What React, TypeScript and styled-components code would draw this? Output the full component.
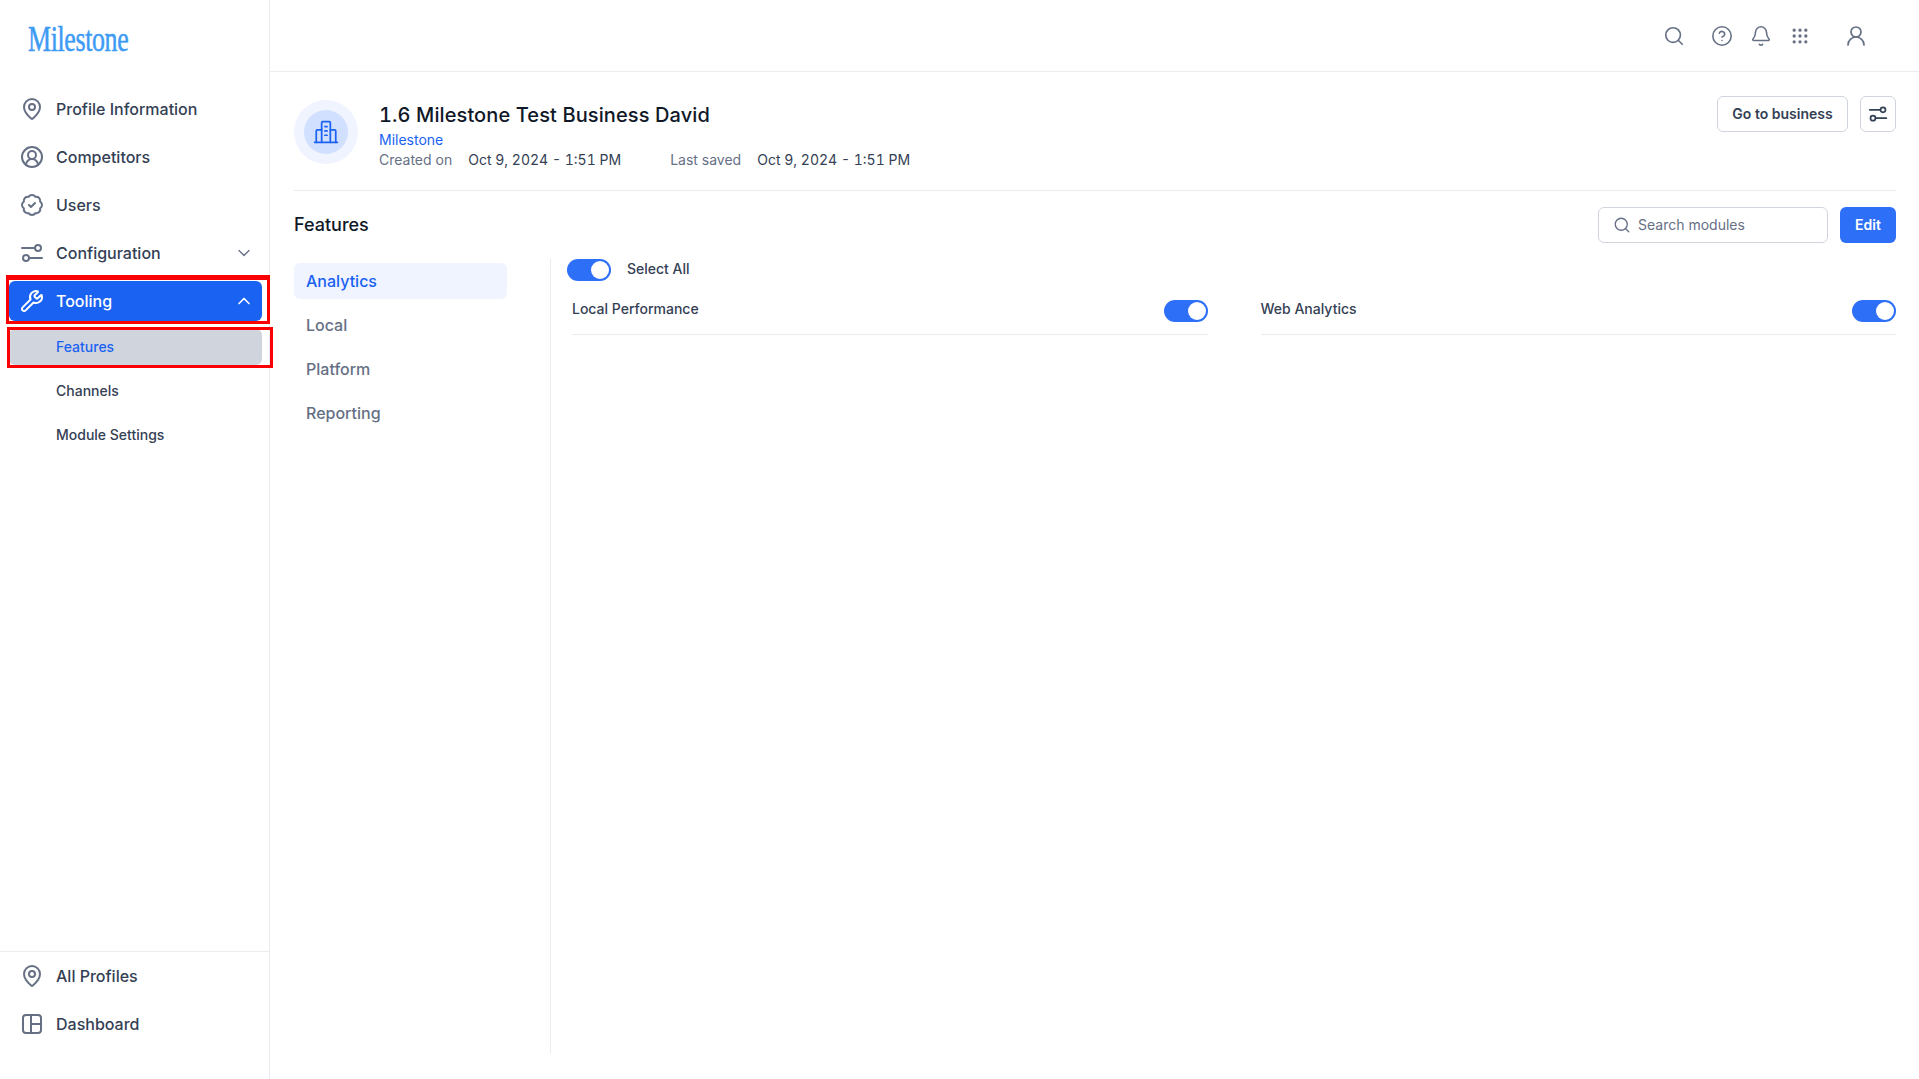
import styled, { createGlobalStyle } from "styled-components";
import {
  Bell,
  BadgeCheck,
  ChevronDown,
  ChevronUp,
  CircleHelp,
  CircleUserRound,
  Grip,
  MapPin,
  Search,
  UserRound,
  Wrench,
} from "lucide-react";

const GlobalStyle = createGlobalStyle`
  html, body {
    margin: 0;
    padding: 0;
    height: 100%;
    background: #fff;
    font-family: Inter, "Liberation Sans", sans-serif;
    overflow: hidden;
  }
  * {
    box-sizing: border-box;
  }
`;

function SlidersIcon({ size = 24 }: { size?: number }) {
  return (
    <svg width={size} height={size} viewBox="0 0 24 24" fill="none" stroke="currentColor" strokeWidth="2" strokeLinecap="round">
      <circle cx="18" cy="7" r="3" />
      <circle cx="6" cy="17" r="3" />
      <path d="M2 7h13M9 17h13" />
    </svg>
  );
}

function DashboardIcon() {
  return (
    <svg width="24" height="24" viewBox="0 0 24 24" fill="none" stroke="currentColor" strokeWidth="2" strokeLinejoin="round">
      <rect x="3" y="3" width="18" height="18" rx="3" />
      <path d="M11 3v18M11 12h10" />
    </svg>
  );
}

function BuildingIcon() {
  return (
    <svg width="26" height="26" viewBox="0 0 24 24" fill="none" stroke="currentColor" strokeWidth="1.6" strokeLinecap="round" strokeLinejoin="round">
      <path d="M1.5 21.5h21" />
      <path d="M8 21.5V3.5a1 1 0 0 1 1-1h6a1 1 0 0 1 1 1v18" />
      <path d="M8 10H4a1 1 0 0 0-1 1v10.5M16 10h4a1 1 0 0 1 1 1v10.5" />
      <path d="M11 7h2M11 11h2M11 15h2" />
    </svg>
  );
}

const Shell = styled.div`
  display: flex;
  height: 100vh;
  color: #344054;
`;

const Sidebar = styled.aside`
  width: 270px;
  flex-shrink: 0;
  display: flex;
  flex-direction: column;
  border-right: 1px solid #eaecf0;
`;

const LogoBar = styled.div`
  height: 89px;
  padding: 21px 0 0 28px;
`;

const Logo = styled.div`
  display: inline-block;
  font-family: "Liberation Serif", serif;
  font-size: 35px;
  line-height: 38px;
  letter-spacing: -0.5px;
  color: #3d9bf4;
  -webkit-text-stroke: 0.5px #3d9bf4;
  transform: scaleX(0.74);
  transform-origin: left center;
`;

const NavList = styled.nav`
  flex: 1;
  display: flex;
  flex-direction: column;
  gap: 8px;
  padding: 0 7px 0 9px;
`;

const NavItem = styled.div<{ $active?: boolean; $boxed?: boolean }>`
  position: relative;
  height: 40px;
  flex-shrink: 0;
  display: flex;
  align-items: center;
  gap: 12px;
  padding: 0 8px 0 11px;
  border-radius: 6px;
  font-size: 16px;
  font-weight: 500;
  color: ${(p) => (p.$active ? "#fff" : "#344054")};
  background: ${(p) => (p.$active ? "#1a62f2" : "transparent")};

  > svg:first-child {
    flex-shrink: 0;
    color: ${(p) => (p.$active ? "#fff" : "#667085")};
  }

  ${(p) =>
    p.$boxed &&
    `
    &::after {
      content: "";
      position: absolute;
      inset: -6px -8px -3px -3px;
      border: 3px solid #fa0000;
      border-top-width: 5px;
      pointer-events: none;
    }
  `}
`;

const NavLabel = styled.span`
  flex: 1;
`;

const Caret = styled.span<{ $active?: boolean }>`
  display: flex;
  color: ${(p) => (p.$active ? "#fff" : "#667085")};
`;

const SubList = styled.div`
  display: flex;
  flex-direction: column;
  margin-top: -4px;
`;

const SubItem = styled.div<{ $active?: boolean }>`
  position: relative;
  height: ${(p) => (p.$active ? "36px" : "44px")};
  margin: ${(p) => (p.$active ? "4px 0" : "0")};
  display: flex;
  align-items: center;
  padding: 0 0 1px 47px;
  border-radius: 6px;
  font-size: 14px;
  font-weight: 500;
  color: ${(p) => (p.$active ? "#1a62f2" : "#344054")};
  background: ${(p) => (p.$active ? "#d0d5dd" : "transparent")};

  ${(p) =>
    p.$active &&
    `
    &::after {
      content: "";
      position: absolute;
      inset: -2px -11px -3px -2px;
      border: 3px solid #fa0000;
      pointer-events: none;
    }
  `}
`;

const SidebarFooter = styled.div`
  display: flex;
  flex-direction: column;
  gap: 8px;
  padding: 4px 7px 35px 9px;
  border-top: 1px solid #eaecf0;
`;

const Main = styled.main`
  flex: 1;
  min-width: 0;
  display: flex;
  flex-direction: column;
`;

const TopBar = styled.header`
  height: 72px;
  flex-shrink: 0;
  display: flex;
  align-items: center;
  justify-content: flex-end;
  padding: 0 51px 0 0;
  border-bottom: 1px solid #eaecf0;
  color: #667085;
`;

const TopIcon = styled.span<{ $gap: number }>`
  display: flex;
  margin-left: ${(p) => p.$gap}px;
`;

const Content = styled.div`
  flex: 1;
  display: flex;
  flex-direction: column;
  padding: 24px 23px 25px 24px;
  min-height: 0;
`;

const BusinessHeader = styled.section`
  display: flex;
  justify-content: space-between;
  height: 95px;
  border-bottom: 1px solid #eaecf0;
`;

const BusinessInfo = styled.div`
  display: flex;
  gap: 21px;
`;

const AvatarRing = styled.div`
  margin-top: 4px;
  width: 64px;
  height: 64px;
  border-radius: 50%;
  background: #eff4ff;
  display: flex;
  align-items: center;
  justify-content: center;
`;

const AvatarCore = styled.div`
  width: 44px;
  height: 44px;
  border-radius: 50%;
  background: #d1e0ff;
  color: #1a62f2;
  display: flex;
  align-items: center;
  justify-content: center;
`;

const BusinessTitle = styled.h1`
  margin: 6px 0 0;
  font-size: 20px;
  line-height: 26px;
  font-weight: 500;
  letter-spacing: 0.1px;
  font-variant-numeric: tabular-nums;
  color: #101828;
`;

const BusinessLink = styled.a`
  display: block;
  margin-top: 2px;
  font-size: 14px;
  line-height: 20px;
  color: #1a62f2;
`;

const MetaRow = styled.div`
  display: flex;
  font-size: 14px;
  line-height: 20px;
  color: #344054;
`;

const MetaLabel = styled.span<{ $space?: number }>`
  color: #667085;
  margin-left: ${(p) => p.$space ?? 0}px;
  margin-right: 16px;
`;

const MetaValue = styled.span`
  font-variant-numeric: tabular-nums;
`;

const HeaderActions = styled.div`
  display: flex;
  gap: 12px;
`;

const OutlineButton = styled.button<{ $square?: boolean }>`
  height: 36px;
  width: ${(p) => (p.$square ? "36px" : "131px")};
  display: flex;
  align-items: center;
  justify-content: center;
  padding: 0 0 1px;
  border: 1px solid #d0d5dd;
  border-radius: 6px;
  background: #fff;
  font-family: inherit;
  font-size: 14px;
  font-weight: 600;
  color: #344054;
`;

const SectionBar = styled.div`
  display: flex;
  align-items: center;
  justify-content: space-between;
  padding-top: 16px;
  height: 52px;
`;

const SectionTitle = styled.h2`
  margin: 0 0 1px;
  font-size: 18px;
  font-weight: 500;
  color: #101828;
`;

const SectionTools = styled.div`
  display: flex;
  gap: 12px;
`;

const SearchBox = styled.div`
  width: 230px;
  height: 36px;
  display: flex;
  align-items: center;
  gap: 7px;
  padding: 0 15px 1px 14px;
  border: 1px solid #d0d5dd;
  border-radius: 6px;
  font-size: 14px;
  color: #667085;
`;

const PrimaryButton = styled.button`
  width: 56px;
  height: 36px;
  padding: 0 0 1px;
  border: 0;
  border-radius: 6px;
  background: #2d6ff7;
  color: #fff;
  font-family: inherit;
  font-size: 14px;
  font-weight: 600;
`;

const Body = styled.div`
  flex: 1;
  display: flex;
  min-height: 0;
  margin-top: 16px;
`;

const TabColumn = styled.div`
  width: 257px;
  flex-shrink: 0;
  padding-top: 4px;
  display: flex;
  flex-direction: column;
  gap: 8px;
  border-right: 1px solid #eaecf0;
`;

const Tab = styled.div<{ $active?: boolean }>`
  width: 213px;
  height: 36px;
  display: flex;
  align-items: center;
  padding-left: 12px;
  border-radius: 6px;
  font-size: 16px;
  font-weight: 500;
  color: ${(p) => (p.$active ? "#1a62f2" : "#667085")};
  background: ${(p) => (p.$active ? "#eff4ff" : "transparent")};
`;

const FeaturePane = styled.div`
  flex: 1;
  min-width: 0;
  padding-left: 16px;
`;

const SelectAll = styled.div`
  display: flex;
  align-items: center;
  gap: 16px;
  height: 22px;
  font-size: 14px;
  line-height: 18px;
  font-weight: 500;
  color: #344054;

  > span:last-child {
    margin-top: -2px;
  }
`;

const FeatureGrid = styled.div`
  display: grid;
  grid-template-columns: 1fr 1fr;
  gap: 53px;
  margin: 19px 0 0 5px;
`;

const FeatureRow = styled.div`
  height: 35px;
  display: flex;
  justify-content: space-between;
  border-bottom: 1px solid #eaecf0;
  font-size: 14px;
  font-weight: 500;
  line-height: 18px;
  color: #344054;
`;

const Toggle = styled.span`
  width: 44px;
  height: 22px;
  display: flex;
  justify-content: flex-end;
  padding: 2px;
  border-radius: 11px;
  background: #2d6ff7;
  flex-shrink: 0;

  &::after {
    content: "";
    width: 18px;
    height: 18px;
    border-radius: 50%;
    background: #fff;
  }
`;

export default function App() {
  return (
    <>
      <GlobalStyle />
      <Shell>
        <Sidebar>
          <LogoBar>
            <Logo>Milestone</Logo>
          </LogoBar>
          <NavList>
            <NavItem>
              <MapPin size={24} strokeWidth={2} />
              <NavLabel>Profile Information</NavLabel>
            </NavItem>
            <NavItem>
              <CircleUserRound size={24} strokeWidth={2} />
              <NavLabel>Competitors</NavLabel>
            </NavItem>
            <NavItem>
              <BadgeCheck size={24} strokeWidth={2} />
              <NavLabel>Users</NavLabel>
            </NavItem>
            <NavItem>
              <SlidersIcon />
              <NavLabel>Configuration</NavLabel>
              <Caret>
                <ChevronDown size={20} strokeWidth={1.6} />
              </Caret>
            </NavItem>
            <NavItem $active $boxed>
              <Wrench size={24} strokeWidth={2} />
              <NavLabel>Tooling</NavLabel>
              <Caret $active>
                <ChevronUp size={20} strokeWidth={2} />
              </Caret>
            </NavItem>
            <SubList>
              <SubItem $active>Features</SubItem>
              <SubItem>Channels</SubItem>
              <SubItem>Module Settings</SubItem>
            </SubList>
          </NavList>
          <SidebarFooter>
            <NavItem>
              <MapPin size={24} strokeWidth={2} />
              <NavLabel>All Profiles</NavLabel>
            </NavItem>
            <NavItem>
              <DashboardIcon />
              <NavLabel>Dashboard</NavLabel>
            </NavItem>
          </SidebarFooter>
        </Sidebar>

        <Main>
          <TopBar>
            <TopIcon $gap={0}>
              <Search size={22} strokeWidth={1.8} />
            </TopIcon>
            <TopIcon $gap={26}>
              <CircleHelp size={22} strokeWidth={1.7} />
            </TopIcon>
            <TopIcon $gap={17}>
              <Bell size={22} strokeWidth={1.7} />
            </TopIcon>
            <TopIcon $gap={18}>
              <Grip size={20} strokeWidth={2} />
            </TopIcon>
            <TopIcon $gap={34}>
              <UserRound size={24} strokeWidth={1.7} />
            </TopIcon>
          </TopBar>

          <Content>
            <BusinessHeader>
              <BusinessInfo>
                <AvatarRing>
                  <AvatarCore>
                    <BuildingIcon />
                  </AvatarCore>
                </AvatarRing>
                <div>
                  <BusinessTitle>1.6 Milestone Test Business David</BusinessTitle>
                  <BusinessLink>Milestone</BusinessLink>
                  <MetaRow>
                    <MetaLabel>Created on</MetaLabel>
                    <MetaValue>Oct 9, 2024 - 1:51 PM</MetaValue>
                    <MetaLabel $space={49}>Last saved</MetaLabel>
                    <MetaValue>Oct 9, 2024 - 1:51 PM</MetaValue>
                  </MetaRow>
                </div>
              </BusinessInfo>
              <HeaderActions>
                <OutlineButton>Go to business</OutlineButton>
                <OutlineButton $square>
                  <SlidersIcon size={20} />
                </OutlineButton>
              </HeaderActions>
            </BusinessHeader>

            <SectionBar>
              <SectionTitle>Features</SectionTitle>
              <SectionTools>
                <SearchBox>
                  <Search size={18} strokeWidth={1.8} />
                  Search modules
                </SearchBox>
                <PrimaryButton>Edit</PrimaryButton>
              </SectionTools>
            </SectionBar>

            <Body>
              <TabColumn>
                <Tab $active>Analytics</Tab>
                <Tab>Local</Tab>
                <Tab>Platform</Tab>
                <Tab>Reporting</Tab>
              </TabColumn>
              <FeaturePane>
                <SelectAll>
                  <Toggle />
                  <span>Select All</span>
                </SelectAll>
                <FeatureGrid>
                  <FeatureRow>
                    Local Performance
                    <Toggle />
                  </FeatureRow>
                  <FeatureRow>
                    Web Analytics
                    <Toggle />
                  </FeatureRow>
                </FeatureGrid>
              </FeaturePane>
            </Body>
          </Content>
        </Main>
      </Shell>
    </>
  );
}
